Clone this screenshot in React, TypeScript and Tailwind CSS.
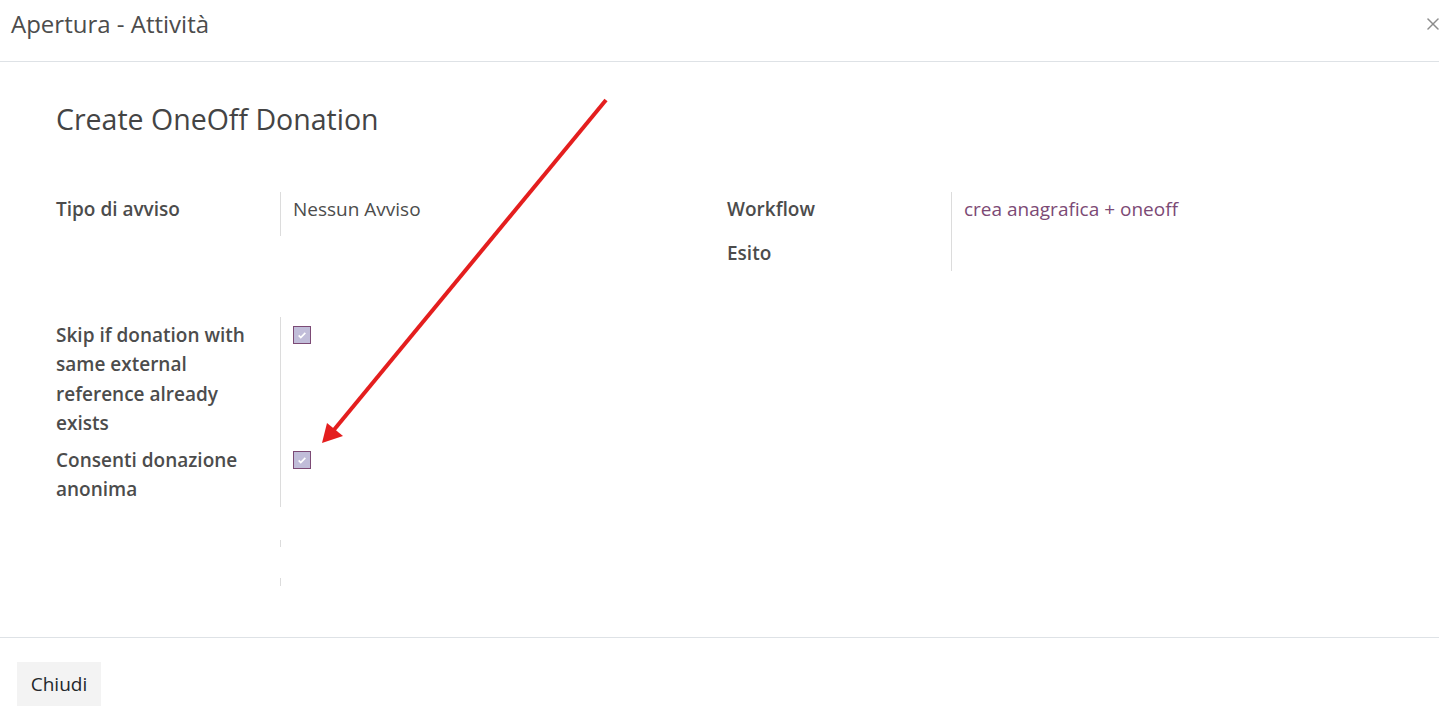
import { X } from 'lucide-react';

const labelCls = 'w-[224px] shrink-0 pr-4 font-semibold text-[#4c4c4c]';

const CheckBox = () => (
  <div className="mt-[9px] flex h-[18px] w-[18px] items-center justify-center border border-[#7c4a75] bg-[#c1bdd9]">
    <svg viewBox="0 0 12 12" className="h-[10px] w-[10px]">
      <path d="M2 6.5l2.5 2.5L10 3.5" fill="none" stroke="white" strokeWidth="2" />
    </svg>
  </div>
);

const App = () => {
  return (
    <div className="relative flex h-[720px] w-full flex-col bg-white text-[19px] leading-[29px] text-[#4c4c4c] [font-family:'Open_Sans','Noto_Sans',sans-serif]">
      {/* Header */}
      <div className="flex h-[62px] shrink-0 items-center justify-between border-b border-[#dee2e6] pb-[14px] pl-[11px]">
        <h4 className="text-[24px] text-[#4c4c4c]">Apertura - Attività</h4>
        <button className="mr-[-4px] text-[#8c8c8c]">
          <X size={20} strokeWidth={1.8} />
        </button>
      </div>

      {/* Body */}
      <div className="flex-1 px-[56px] pt-[40px]">
        <h1 className="text-[28.5px] leading-[34px] text-[#444]">Create OneOff Donation</h1>

        <div className="mt-[56px] flex">
          {/* left group */}
          <div className="flex w-[671px]">
            <div className={`${labelCls} h-[44px] pt-[3px]`}>Tipo di avviso</div>
            <div className="h-[44px] border-l border-[#dcdcdc] pl-3 pt-[3px]">Nessun Avviso</div>
          </div>
          {/* right group */}
          <div className="flex">
            <div className={`${labelCls} flex flex-col`}>
              <div className="h-[44px] pt-[3px]">Workflow</div>
              <div className="h-[35px] pt-[3px]">Esito</div>
            </div>
            <div className="h-[79px] border-l border-[#dcdcdc] pl-3 pt-[3px] text-[#7c4a75]">
              crea anagrafica + oneoff
            </div>
          </div>
        </div>

        <div className="mt-[46px] flex">
          <div className={`${labelCls} flex flex-col pt-[4px] leading-[29.4px]`}>
            <div className="mb-[7px] w-[200px]">Skip if donation with same external reference already exists</div>
            <div className="w-[200px]">Consenti donazione anonima</div>
          </div>
          <div className="flex h-[190px] flex-col border-l border-[#dcdcdc] pl-3">
            <div className="h-[125px]">
              <CheckBox />
            </div>
            <CheckBox />
          </div>
        </div>

        <div className="ml-[224px] mt-[33px] h-[7px] border-l border-[#dcdcdc]" />
        <div className="ml-[224px] mt-[31px] h-[8px] border-l border-[#dcdcdc]" />
      </div>

      {/* Footer */}
      <div className="h-[83px] shrink-0 border-t border-[#dee2e6] px-[17px] pt-[24px]">
        <button className="h-[44px] w-[84px] bg-[#f3f3f3] text-[#23272b]">Chiudi</button>
      </div>

      {/* Annotation arrow */}
      <svg className="pointer-events-none absolute inset-0 h-[720px] w-full">
        <line x1="606" y1="100" x2="333" y2="431" stroke="#e41e1e" strokeWidth="4" />
        <polygon points="322,443 327,423 343,436" fill="#e41e1e" />
      </svg>
    </div>
  );
};

export default App;
